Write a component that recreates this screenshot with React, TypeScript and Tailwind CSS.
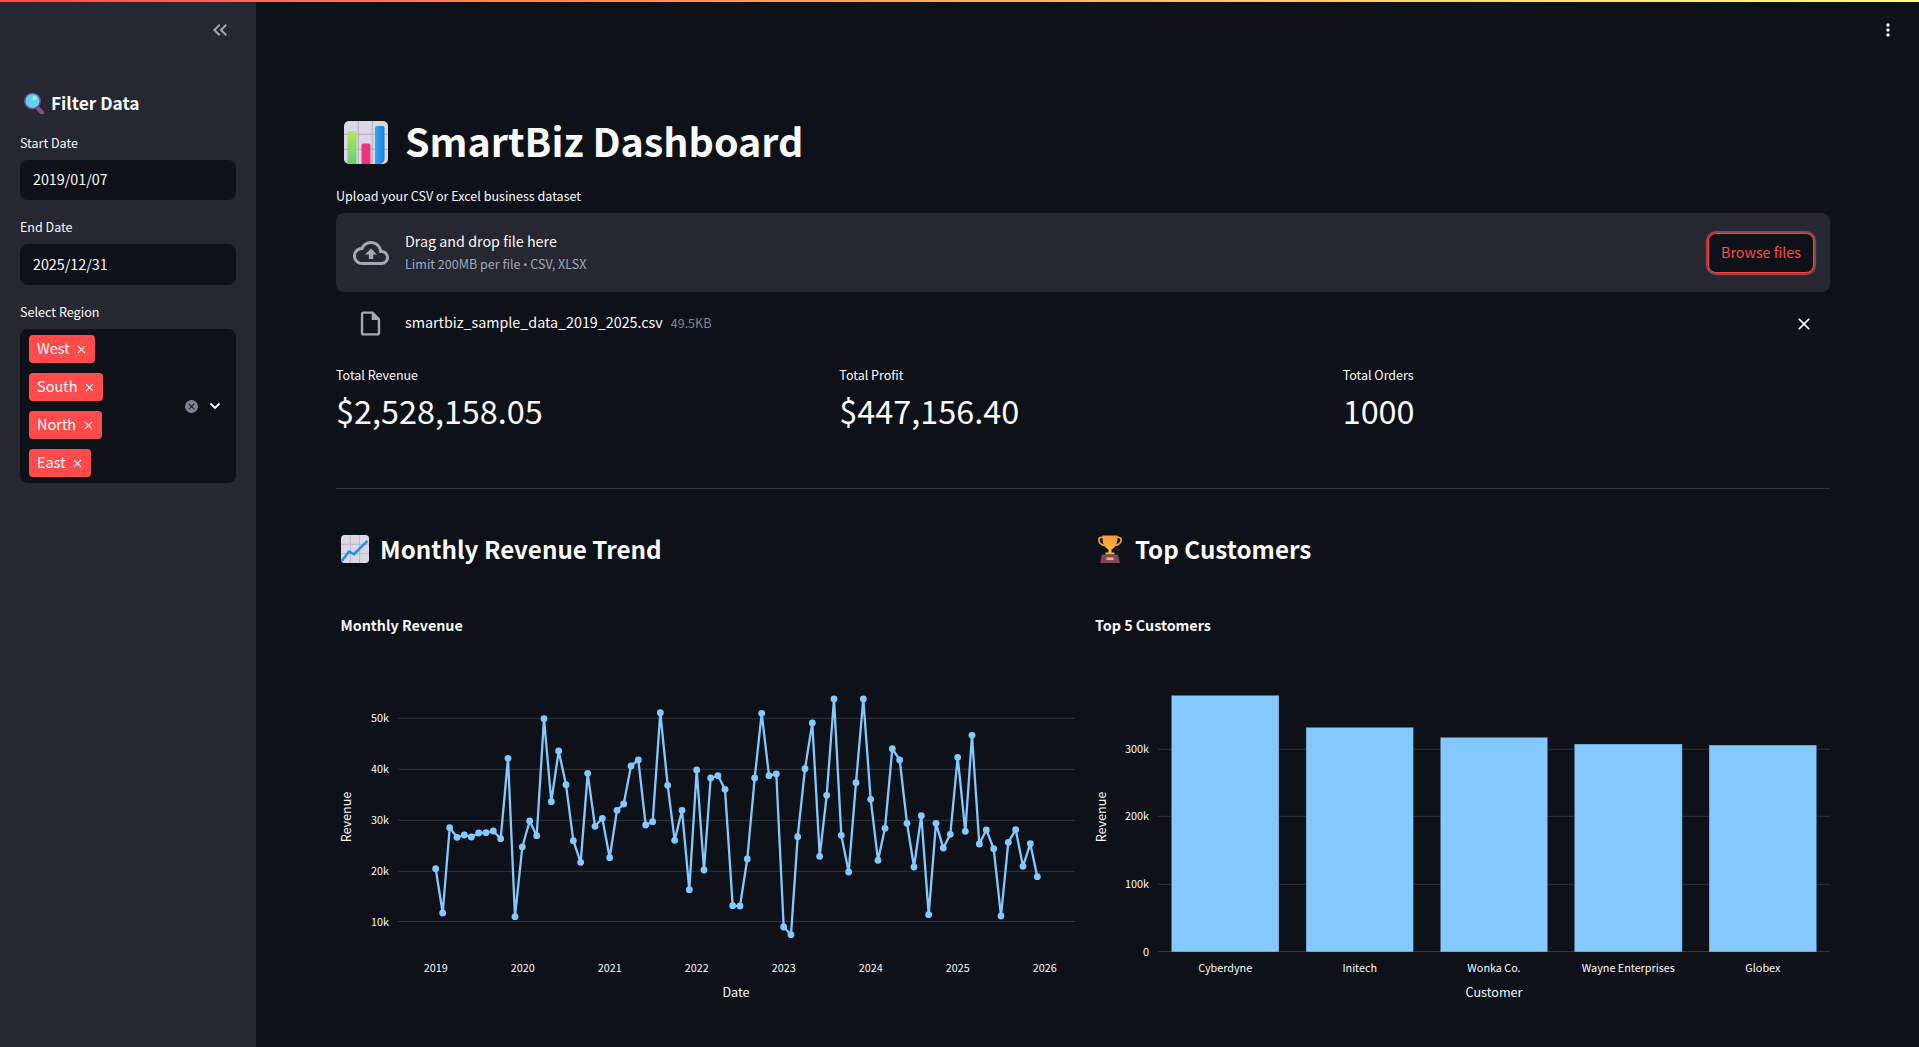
import React from "react";

const z4 = [[317,1046],[338,1179],[359,923],[381,952],[403,945],[424,951],[446,939],[468,938],[490,933],[512,956],[534,715],[555,1190],[577,981],[599,903],[620,947],[642,596],[664,845],[686,693],[708,794],[730,962],[752,1027],[773,760],[795,919],[817,895],[839,1013],[861,871],[881,852],[903,738],[925,720],[947,915],[968,905],[991,578],[1013,796],[1034,961],[1056,871],[1078,1109],[1100,750],[1122,1050],[1142,774],[1164,767]];
const z5 = [[15,328],[38,677],[60,678],[82,537],[104,294],[125,100],[147,287],[169,282],[191,741],[213,764],[233,470],[255,266],[277,129],[299,529],[320,346],[342,57],[364,466],[386,576],[408,308],[430,57],[452,358],[474,541],[495,445],[517,206],[539,240],[561,430],[582,561],[604,407],[626,704],[648,430],[670,504],[691,463],[713,232],[736,454],[756,166],[778,492],[799,450],[821,506],[843,708],[865,487],[887,449],[909,559],[931,491],[952,590]];
const pts = [
  ...z4.map(([x, y]) => [330 + x / 3, 520 + y / 3]),
  ...z5.map(([x, y]) => [720 + x / 3, 680 + y / 3]),
];
const linePoints = pts.map(([x, y]) => `${x.toFixed(1)},${y.toFixed(1)}`).join(" ");

const GRID = "#31333f";
const LABEL = "#fafafa";

function MaterialIcon({ d, className }: { d: string; className: string }) {
  return (
    <svg viewBox="0 0 24 24" fill="currentColor" className={className}>
      <path d={d} />
    </svg>
  );
}

const CLOSE = "M19 6.41 17.59 5 12 10.59 6.41 5 5 6.41 10.59 12 5 17.59 6.41 19 12 13.41 17.59 19 19 17.59 13.41 12z";

function Tag({ label, w }: { label: string; w: string }) {
  return (
    <div className={`flex h-[28px] items-center justify-between rounded-[4px] bg-[#ff4b4b] pl-[8px] pr-[7px] text-[14.5px] leading-[24px] text-white ${w}`}>
      <span className="pb-[2px]">{label}</span>
      <MaterialIcon d={CLOSE} className="h-[13px] w-[13px]" />
    </div>
  );
}

function DateField({ value, h, label }: { value: string; h: string; label: string }) {
  return (
    <>
      <div className="mt-[17px] h-[20px] text-[12.5px] leading-[19px] text-[#fafafa]">{label}</div>
      <div className={`mt-[7px] flex items-center rounded-[8px] bg-[#0e1117] pb-[2px] pl-[13px] text-[14.3px] text-[#fafafa] ${h}`}>{value}</div>
    </>
  );
}

function SearchEmoji() {
  return (
    <svg viewBox="0 0 21 22" className="h-[22px] w-[21px] shrink-0">
      <path d="M13.5 15 L19 20.5" stroke="#8b4f90" strokeWidth="4" strokeLinecap="round" />
      <circle cx="9.5" cy="9" r="8.6" fill="#6a4c93" />
      <circle cx="9.5" cy="9" r="7" fill="#63d2ee" />
      <circle cx="11.5" cy="6.2" r="2.2" fill="#9be6f7" />
    </svg>
  );
}

function BarEmoji() {
  return (
    <svg viewBox="0 0 44 43" className="h-[43px] w-[44px] shrink-0">
      <defs>
        <linearGradient id="bg" x1="0" y1="0" x2="0" y2="1"><stop offset="0" stopColor="#b6e85a" /><stop offset="1" stopColor="#5fd07a" /></linearGradient>
        <linearGradient id="bp" x1="0" y1="0" x2="0" y2="1"><stop offset="0" stopColor="#e83a78" /><stop offset="1" stopColor="#f0307f" /></linearGradient>
        <linearGradient id="bb" x1="0" y1="0" x2="1" y2="0"><stop offset="0" stopColor="#29a9f5" /><stop offset="1" stopColor="#1c7fd8" /></linearGradient>
      </defs>
      <rect x="0" y="0" width="44" height="43" rx="5" fill="#dcd7e4" />
      <path d="M14.3 0V43M28.3 0V43M0 13.3H44M0 28.3H44" stroke="#b9b3c4" strokeWidth="1.2" />
      <path d="M3.5 43V12a2 2 0 0 1 2-2h5a2 2 0 0 1 2 2V43z" fill="url(#bg)" />
      <path d="M17.5 43V24.5a2 2 0 0 1 2-2h5a2 2 0 0 1 2 2V43z" fill="url(#bp)" />
      <path d="M31 43V7a2 2 0 0 1 2-2h5.5a2 2 0 0 1 2 2V38a5 5 0 0 1-5 5z" fill="url(#bb)" />
    </svg>
  );
}

function TrendEmoji() {
  return (
    <svg viewBox="0 0 28 28" className="h-[28px] w-[28px] shrink-0">
      <rect width="28" height="28" rx="3.5" fill="#dcd7e4" />
      <path d="M9.3 0V28M18.6 0V28M0 9.3H28M0 18.6H28" stroke="#b9b3c4" strokeWidth="0.9" />
      <path d="M0.8 26 L8 16.5 L13 19.2 L26.5 5.8" fill="none" stroke="#1c90e8" strokeWidth="2.4" />
    </svg>
  );
}

function TrophyEmoji() {
  return (
    <svg viewBox="0 0 24 28" className="h-[28px] w-[24px] shrink-0">
      <defs>
        <linearGradient id="tg" x1="0" y1="0" x2="0" y2="1"><stop offset="0" stopColor="#f59a3a" /><stop offset="1" stopColor="#fcc13e" /></linearGradient>
      </defs>
      <path d="M5 2.5C1.5 1.5.5 4 1 6c.7 2.8 3.3 4 6 4.5M19 2.5c3.5-1 4.5 1.5 4 3.5-.7 2.8-3.3 4-6 4.5" fill="none" stroke="#f2a33a" strokeWidth="1.7" />
      <path d="M4.5 0.5H19.5C20 6.5 18 12.5 13.5 14.5V19H10.5V14.5C6 12.5 4 6.5 4.5 0.5Z" fill="url(#tg)" />
      <rect x="7.5" y="17.5" width="9" height="2" fill="#f6b73c" />
      <path d="M4 19.5H20L22 28H2Z" fill="#7e4460" />
      <rect x="8.5" y="22.5" width="7" height="2.6" fill="#f3b63e" />
    </svg>
  );
}

function Metric({ label, value }: { label: string; value: string }) {
  return (
    <div>
      <div className="h-[20px] text-[12.5px] leading-[19px] text-[#fafafa]">{label}</div>
      <div className="mt-[1px] h-[52px] text-[32.4px] leading-[47px] text-[#fafafa]">{value}</div>
    </div>
  );
}

const svgText = { fontFamily: "inherit" };

function LineChart() {
  const yt: [string, number][] = [["50k", 718.3], ["40k", 769.3], ["30k", 820.3], ["20k", 871.3], ["10k", 921.5]];
  const xt: [string, number][] = [["2019", 435.7], ["2020", 522.7], ["2021", 609.7], ["2022", 696.7], ["2023", 783.7], ["2024", 870.7], ["2025", 957.7], ["2026", 1044.7]];
  return (
    <svg viewBox="336 605 739 420" className="mt-[36px] h-[420px] w-full" style={svgText}>
      <text x="340.5" y="624.5" dominantBaseline="central" fontSize="14.3" fontWeight="700" fill={LABEL}>Monthly Revenue</text>
      {yt.map(([t, y]) => (
        <g key={t}>
          <path d={`M398 ${y}H1075`} stroke={GRID} strokeWidth="1" />
          <text x="389" y={y - 1} textAnchor="end" dominantBaseline="central" fontSize="10.8" fill={LABEL}>{t}</text>
        </g>
      ))}
      {xt.map(([t, x]) => (
        <text key={t} x={x} y="967" textAnchor="middle" dominantBaseline="central" fontSize="10.8" fill={LABEL}>{t}</text>
      ))}
      <polyline points={linePoints} fill="none" stroke="#83c9ff" strokeWidth="2.3" strokeLinejoin="round" />
      {pts.map(([x, y], i) => (
        <circle key={i} cx={x} cy={y} r="3.4" fill="#83c9ff" />
      ))}
      <text x="736" y="991" textAnchor="middle" dominantBaseline="central" fontSize="12.6" fill={LABEL}>Date</text>
      <text transform="translate(345 817) rotate(-90)" textAnchor="middle" dominantBaseline="central" fontSize="12.6" fill={LABEL}>Revenue</text>
    </svg>
  );
}

function BarChart() {
  const yt: [string, number][] = [["300k", 749.3], ["200k", 816.3], ["100k", 884.3], ["0", 951.5]];
  const bars: [string, number, number, number][] = [
    ["Cyberdyne", 1171.3, 1279, 695.3],
    ["Initech", 1306, 1413.5, 727.3],
    ["Wonka Co.", 1440.3, 1547.7, 737.3],
    ["Wayne Enterprises", 1574.3, 1682.3, 744],
    ["Globex", 1709, 1816.7, 745],
  ];
  return (
    <svg viewBox="1091 605 739 420" className="mt-[36px] h-[420px] w-full" style={svgText}>
      <text x="1095" y="624.5" dominantBaseline="central" fontSize="14.3" fontWeight="700" fill={LABEL}>Top 5 Customers</text>
      {yt.map(([t, y]) => (
        <g key={t}>
          <path d={`M1158 ${y}H1830`} stroke={GRID} strokeWidth="1" />
          <text x="1149" y={y - 1} textAnchor="end" dominantBaseline="central" fontSize="10.8" fill={LABEL}>{t}</text>
        </g>
      ))}
      {bars.map(([t, a, b, top]) => (
        <g key={t}>
          <rect x={a} y={top} width={b - a} height={952 - top} fill="#83c9ff" stroke="#0e1117" strokeOpacity="0.35" strokeWidth="1" />
          <text x={(a + b) / 2} y="967" textAnchor="middle" dominantBaseline="central" fontSize="10.8" fill={LABEL}>{t}</text>
        </g>
      ))}
      <text x="1494" y="991" textAnchor="middle" dominantBaseline="central" fontSize="12.6" fill={LABEL}>Customer</text>
      <text transform="translate(1100 817) rotate(-90)" textAnchor="middle" dominantBaseline="central" fontSize="12.6" fill={LABEL}>Revenue</text>
    </svg>
  );
}

export default function App() {
  return (
    <div className="flex h-screen flex-col overflow-hidden bg-[#0e1117] font-['Noto_Sans_CJK_SC','Source_Sans_Pro',sans-serif] text-[#fafafa]">
      <div className="h-[2px] shrink-0 bg-gradient-to-r from-[#ff4b4b] to-[#fffd80]" />
      <div className="flex min-h-0 flex-1">
        <aside className="w-[256px] shrink-0 bg-[#262730] px-[20px] pt-[16px]">
          <div className="flex justify-end pr-[4px] text-[#a3a8b8]">
            <MaterialIcon d="M17.59 18 19 16.59 14.42 12 19 7.41 17.59 6l-6 6zM11 18l1.41-1.41L7.83 12l4.58-4.59L11 6l-6 6z" className="h-[24px] w-[24px]" />
          </div>
          <div className="mb-[-1px] mt-[47px] flex h-[28px] items-center">
            <span className="ml-[3px]"><SearchEmoji /></span>
            <span className="ml-[7px] text-[17.3px] font-semibold leading-[28px]">Filter Data</span>
          </div>
          <DateField label="Start Date" value="2019/01/07" h="h-[40px]" />
          <DateField label="End Date" value="2025/12/31" h="h-[41px]" />
          <div className="mt-[17px] h-[20px] text-[12.6px] leading-[19px]">Select Region</div>
          <div className="mt-[7px] flex h-[154px] items-center rounded-[8px] bg-[#0e1117] pl-[9px] pr-[15px]">
            <div className="flex flex-1 flex-col gap-[10px]">
              <Tag label="West" w="w-[66px]" />
              <Tag label="South" w="w-[74px]" />
              <Tag label="North" w="w-[73px]" />
              <Tag label="East" w="w-[62px]" />
            </div>
            <div className="flex h-[13px] w-[13px] items-center justify-center rounded-full bg-[#808495] text-[#0e1117]">
              <MaterialIcon d={CLOSE} className="h-[11px] w-[11px]" />
            </div>
            <svg viewBox="0 0 12 8" className="ml-[11px] h-[8px] w-[12px]" fill="none" stroke="#fafafa" strokeWidth="1.8">
              <path d="M1.5 1.5 6 6l4.5-4.5" />
            </svg>
          </div>
        </aside>

        <main className="relative min-w-0 flex-1 pl-[80px] pr-[89px] pt-[112px]">
          <div className="absolute right-[21px] top-[18px] text-[#fafafa]">
            <MaterialIcon d="M12 8c1.1 0 2-.9 2-2s-.9-2-2-2-2 .9-2 2 .9 2 2 2zm0 2c-1.1 0-2 .9-2 2s.9 2 2 2 2-.9 2-2-.9-2-2-2zm0 6c-1.1 0-2 .9-2 2s.9 2 2 2 2-.9 2-2-.9-2-2-2z" className="h-[20px] w-[20px]" />
          </div>

          <div className="flex h-[56px] items-center">
            <span className="ml-[8px]"><BarEmoji /></span>
            <h1 className="ml-[17px] pb-[4px] text-[39.4px] font-bold leading-[54px]">SmartBiz Dashboard</h1>
          </div>

          <div className="mt-[16px] h-[20px] text-[12.55px] leading-[19px]">Upload your CSV or Excel business dataset</div>
          <div className="mt-[7px] flex h-[79px] items-center rounded-[8px] bg-[#262730] pl-[17px] pr-[13px]">
            <MaterialIcon d="M19.35 10.04C18.67 6.59 15.64 4 12 4 9.11 4 6.6 5.64 5.35 8.04 2.34 8.36 0 10.91 0 14c0 3.31 2.69 6 6 6h13c2.76 0 5-2.24 5-5 0-2.64-2.05-4.78-4.65-4.96zM19 18H6c-2.21 0-4-1.79-4-4 0-2.05 1.53-3.76 3.56-3.97l1.07-.11.5-.95C8.08 7.14 9.94 6 12 6c2.62 0 4.88 1.86 5.39 4.43l.3 1.5 1.53.11c1.56.1 2.78 1.41 2.78 2.96 0 1.65-1.35 3-3 3zM8 13h2.55v3h2.9v-3H16l-4-4z" className="h-[36px] w-[36px] shrink-0 text-[#a3a8b8]" />
            <div className="ml-[16px] flex-1">
              <div className="text-[14.3px] leading-[23px]">Drag and drop file here</div>
              <div className="text-[12.55px] leading-[24px] text-[#a3a8b8]">Limit 200MB per file <span className="font-['Noto_Sans',sans-serif] text-[11px]">•</span> CSV, XLSX</div>
            </div>
            <button className="mr-[3px] h-[40px] w-[106px] rounded-[8px] border border-[#f0444c] bg-[#0e1117] pb-[2px] text-[14.3px] leading-[20px] text-[#ff4b4b] shadow-[0_0_0_2px_#a33c45,0_0_0_3px_#173640]">Browse files</button>
          </div>

          <div className="mt-[8px] flex h-[44px] items-center pl-[20px] pr-[16px]">
            <MaterialIcon d="M14 2H6c-1.1 0-1.99.9-1.99 2L4 20c0 1.1.89 2 1.99 2H18c1.1 0 2-.9 2-2V8l-6-6zM6 20V4h7v5h5v11H6z" className="mt-[3px] h-[29px] w-[29px] shrink-0 text-[#a3a8b8]" />
            <span className="ml-[20px] pb-[2px] text-[14.3px] leading-[23px]">smartbiz_sample_data_2019_2025.csv</span>
            <span className="ml-[8px] text-[12.5px] leading-[23px] text-[#808495]">49.5KB</span>
            <div className="flex-1" />
            <MaterialIcon d={CLOSE} className="mt-[4px] h-[20px] w-[20px] text-[#fafafa]" />
          </div>

          <div className="mt-[21px] grid grid-cols-3 gap-[16px]">
            <Metric label="Total Revenue" value="$2,528,158.05" />
            <Metric label="Total Profit" value="$447,156.40" />
            <Metric label="Total Orders" value="1000" />
          </div>

          <hr className="mt-[50px] border-0 border-t border-[#31333f]" />

          <div className="mt-[40px] grid grid-cols-2 gap-[16px]">
            <div>
              <div className="flex h-[40px] items-center">
                <span className="ml-[5px]"><TrendEmoji /></span>
                <h2 className="ml-[11px] text-[24.2px] font-semibold leading-[38px]">Monthly Revenue Trend</h2>
              </div>
              <LineChart />
            </div>
            <div>
              <div className="flex h-[40px] items-center">
                <span className="ml-[7px]"><TrophyEmoji /></span>
                <h2 className="ml-[13px] text-[24.2px] font-semibold leading-[38px]">Top Customers</h2>
              </div>
              <BarChart />
            </div>
          </div>
        </main>
      </div>
    </div>
  );
}
